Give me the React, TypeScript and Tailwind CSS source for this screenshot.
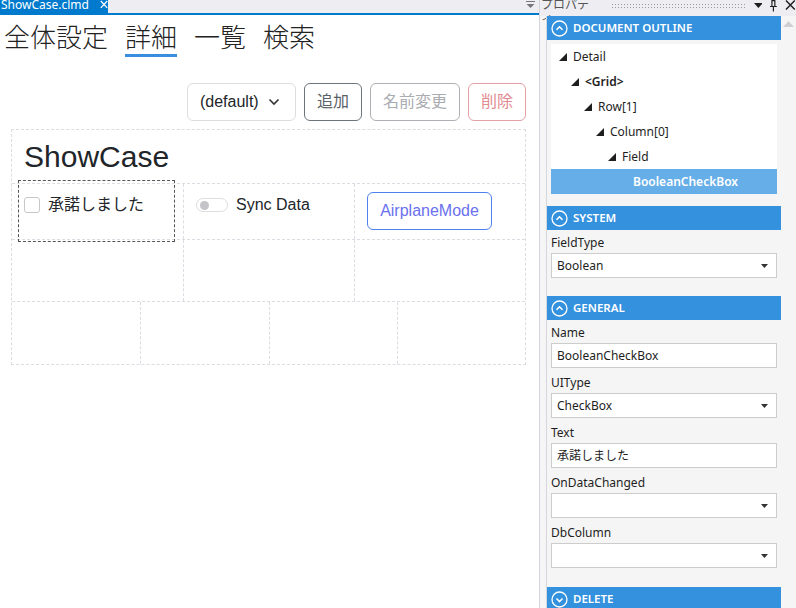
import React from 'react'

type TreeItem = { label: string; pad: string; arrow: boolean; bold?: boolean; selected?: boolean }

const treeItems: TreeItem[] = [
  { label: 'Detail', pad: 'pl-[8px]', arrow: true },
  { label: '<Grid>', pad: 'pl-[20px]', arrow: true, bold: true },
  { label: 'Row[1]', pad: 'pl-[33px]', arrow: true },
  { label: 'Column[0]', pad: 'pl-[45px]', arrow: true },
  { label: 'Field', pad: 'pl-[57px]', arrow: true },
  { label: 'BooleanCheckBox', pad: 'pl-[82px]', arrow: false, bold: true, selected: true },
]

const ExpandedArrow = () => (
  <svg width="8" height="8" viewBox="0 0 8 8" className="mr-[6px] shrink-0">
    <polygon points="8,0 8,8 0,8" fill="#1e1e1e" />
  </svg>
)

const SectionHeader = ({ title, collapsed = false }: { title: string; collapsed?: boolean }) => (
  <div className="flex h-[24px] items-center bg-[#3391dd] pl-[4px] text-white">
    <svg width="17" height="17" viewBox="0 0 17 17" className="shrink-0">
      <circle cx="8.5" cy="8.5" r="7.5" fill="none" stroke="white" strokeWidth="1.3" />
      {collapsed ? (
        <polyline points="5.5,7.5 8.5,10.5 11.5,7.5" fill="none" stroke="white" strokeWidth="1.6" />
      ) : (
        <polyline points="5.5,9.8 8.5,6.8 11.5,9.8" fill="none" stroke="white" strokeWidth="1.6" />
      )}
    </svg>
    <span className="ml-[5px] text-[11.5px] font-semibold leading-none">{title}</span>
  </div>
)

const SelectArrow = () => (
  <svg width="7" height="4" viewBox="0 0 7 4" className="shrink-0">
    <polygon points="0,0 7,0 3.5,4" fill="#333" />
  </svg>
)

const Field = ({
  label,
  value = '',
  select = false,
  first = false,
}: {
  label: string
  value?: string
  select?: boolean
  first?: boolean
}) => (
  <div>
    <div
      className={`flex items-end pb-[2px] pl-[4px] text-[12px] leading-[16px] text-[#1e1e1e] ${
        first ? 'h-[23px]' : 'h-[25px]'
      }`}
    >
      {label}
    </div>
    <div className="mx-[4px] flex h-[25px] items-center justify-between border border-[#cccccc] bg-white pl-[5px] pr-[8px] text-[12px] text-[#1e1e1e]">
      <span>{value}</span>
      {select && <SelectArrow />}
    </div>
  </div>
)

const PropertiesPanel = () => (
  <div className="flex h-[608px] w-[256px] flex-col bg-[#f5f5f5] font-['Noto_Sans','Noto_Sans_CJK_JP',sans-serif]">
    <div className="flex h-[16px] shrink-0 items-start bg-[#eeeef2]">
      <span className="ml-[1px] -mt-[2px] text-[12px] leading-[14px] text-[#555]">プロパティ</span>
      <div className="ml-[12px] mt-[3px] h-[5px] w-[138px] bg-[radial-gradient(#9a9aa2_0.7px,transparent_0.8px)] bg-[length:3px_3px]" />
      <svg width="9" height="5" viewBox="0 0 9 5" className="ml-[8px] mt-[3px]">
        <polygon points="0,0 9,0 4.5,5" fill="#1e1e1e" />
      </svg>
      <svg width="9" height="12" viewBox="0 0 9 12" className="ml-[7px] mt-0">
        <path d="M2.5 0.5h4M3 0.5v6M6 0.5v6M1 6.5h7M4.5 6.5v5" stroke="#1e1e1e" strokeWidth="1.2" fill="none" />
      </svg>
      <svg width="11" height="10" viewBox="0 0 11 10" className="ml-[7px] mt-0">
        <path d="M1 0.5l9 9M10 0.5l-9 9" stroke="#1e1e1e" strokeWidth="1.5" />
      </svg>
    </div>
    <div className="flex min-h-0 flex-1">
      <div className="w-[6px] shrink-0" />
      <div className="w-[235px] shrink-0 overflow-hidden border-l border-[#d6d6de]">
        <SectionHeader title="DOCUMENT OUTLINE" />
        <div className="mx-[4px] mt-[4px] mb-[12px] bg-white">
          {treeItems.map((item) => (
            <div
              key={item.label}
              className={`flex h-[25px] items-center text-[12px] ${item.pad} ${
                item.selected ? 'bg-[#66aee8] text-white' : 'text-[#1e1e1e]'
              } ${item.bold ? 'font-semibold' : ''}`}
            >
              {item.arrow && <ExpandedArrow />}
              <span>{item.label}</span>
            </div>
          ))}
        </div>

        <SectionHeader title="SYSTEM" />
        <div className="mb-[18px]">
          <Field label="FieldType" value="Boolean" select first />
        </div>

        <SectionHeader title="GENERAL" />
        <div className="mb-[19px]">
          <Field label="Name" value="BooleanCheckBox" first />
          <Field label="UIType" value="CheckBox" select />
          <Field label="Text" value="承諾しました" />
          <Field label="OnDataChanged" select />
          <Field label="DbColumn" select />
        </div>

        <SectionHeader title="DELETE" collapsed />
      </div>
      <div className="flex w-[15px] shrink-0 justify-center bg-[#f5f5f5] pt-[5px]">
        <svg width="11" height="6" viewBox="0 0 11 6">
          <polygon points="0,6 11,6 5.5,0" fill="#d0d0d4" />
        </svg>
      </div>
    </div>
  </div>
)

const TopTab = ({ label, active = false }: { label: string; active?: boolean }) => (
  <div className="flex flex-col">
    <span className="text-[26px] font-light leading-[32px] text-[#222]">{label}</span>
    <div className={`mt-[2px] h-[3px] ${active ? 'bg-[#3a8ee0]' : 'bg-transparent'}`} />
  </div>
)

const Designer = () => (
  <div className="flex h-[608px] w-[540px] shrink-0 flex-col border-r border-[#d4d4dc] bg-white">
    <div className="flex h-[13px] shrink-0 items-start justify-between bg-[#eeeef2]">
      <div className="flex h-[13px] w-[108px] items-start overflow-hidden bg-[#007acc] pl-[1px] font-['Noto_Sans',sans-serif] text-white">
        <span className="-mt-[3px] text-[12px] leading-[16px]">ShowCase.clmd</span>
        <svg width="10" height="10" viewBox="0 0 10 10" className="ml-[11px]">
          <path d="M1 0l8 8.5M9 0l-8 8.5" stroke="white" strokeWidth="1.5" />
        </svg>
      </div>
      <svg width="9" height="8" viewBox="0 0 9 8" className="mr-[4px] mt-[1px]">
        <path d="M0 0.5h9" stroke="#777" strokeWidth="1" />
        <polygon points="0.5,3 8.5,3 4.5,7" fill="#777" />
      </svg>
    </div>
    <div className="h-[2px] shrink-0 bg-[#007acc]" />

    <div className="flex gap-[17px] pl-[4px] pt-[5px] font-['Noto_Sans_CJK_JP',sans-serif]">
      <TopTab label="全体設定" />
      <TopTab label="詳細" active />
      <TopTab label="一覧" />
      <TopTab label="検索" />
    </div>

    <div className="mt-[26px] flex justify-end gap-[8px] pr-[13px] font-['Liberation_Sans','Noto_Sans_CJK_JP',sans-serif] text-[16px]">
      <div className="flex h-[38px] w-[109px] items-center justify-between rounded-[6px] border border-[#dddddd] pl-[12px] pr-[15px] text-[#212529]">
        <span>(default)</span>
        <svg width="12" height="8" viewBox="0 0 12 8">
          <polyline points="1.5,1.5 6,6 10.5,1.5" fill="none" stroke="#333" strokeWidth="1.6" />
        </svg>
      </div>
      <button className="h-[38px] rounded-[6px] border border-[#6c757d] px-[12px] text-[#5a6268]">追加</button>
      <button className="h-[38px] rounded-[6px] border border-[#adb0b4] px-[12px] text-[#a9acb0]">名前変更</button>
      <button className="h-[38px] rounded-[6px] border border-[#e3a1a6] px-[12px] text-[#e28a92]">削除</button>
    </div>

    <div className="ml-[11px] mt-[8px] w-[515px] border border-dashed border-[#dcdce2] font-['Liberation_Sans','Noto_Sans_CJK_JP',sans-serif] text-[#212529]">
      <div className="flex h-[53px] items-center pl-[12px] text-[30px]">ShowCase</div>

      <div className="grid h-[56px] grid-cols-3 border-t border-dashed border-[#dcdce2]">
        <div className="relative flex items-start gap-[8px] pl-[12px] pt-[13px]">
          <div className="absolute -top-[4px] -bottom-[3px] left-[6px] right-[8px] border border-dashed border-[#555]" />
          <div className="h-[16px] w-[16px] rounded-[3px] border border-[#c8c8cc] bg-white" />
          <span className="text-[16px] leading-[16px]">承諾しました</span>
        </div>
        <div className="flex items-start border-l border-dashed border-[#dcdce2] pl-[12px] pt-[13px]">
          <div className="mt-[1px] flex h-[14px] w-[32px] items-center rounded-full border border-[#dddddd] bg-white pl-[3px]">
            <div className="h-[9px] w-[9px] rounded-full bg-[#c4c4c8]" />
          </div>
          <span className="ml-[8px] text-[16px] leading-[16px]">Sync Data</span>
        </div>
        <div className="border-l border-dashed border-[#dcdce2] pl-[12px] pt-[8px]">
          <button className="h-[38px] w-[125px] rounded-[6px] border border-[#4f80ee] text-[16px] text-[#6a70ee]">
            AirplaneMode
          </button>
        </div>
      </div>

      <div className="grid h-[62px] grid-cols-3 border-t border-dashed border-[#dcdce2]">
        <div />
        <div className="border-l border-dashed border-[#dcdce2]" />
        <div className="border-l border-dashed border-[#dcdce2]" />
      </div>

      <div className="grid h-[63px] grid-cols-4 border-t border-dashed border-[#dcdce2]">
        <div />
        <div className="border-l border-dashed border-[#dcdce2]" />
        <div className="border-l border-dashed border-[#dcdce2]" />
        <div className="border-l border-dashed border-[#dcdce2]" />
      </div>
    </div>
  </div>
)

export default function App() {
  return (
    <div className="flex h-[608px] w-[796px] overflow-hidden">
      <Designer />
      <PropertiesPanel />
    </div>
  )
}
